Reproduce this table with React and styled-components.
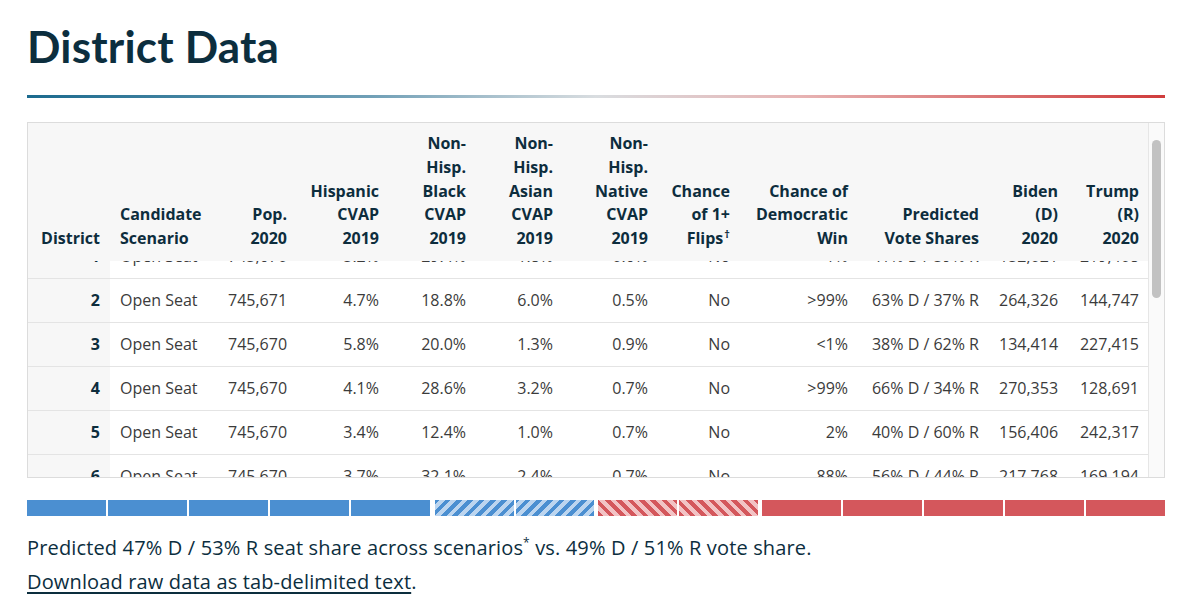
import React, { useLayoutEffect, useRef } from "react";
import styled, { createGlobalStyle } from "styled-components";

const Global = createGlobalStyle`
  html, body { margin: 0; padding: 0; background: #fff; }
  body { font-family: "Open Sans", "Noto Sans", "Liberation Sans", sans-serif; color: #0d2d3d; }
`;

const Page = styled.div`
  padding: 0 35px 0 27px;
  width: 1138px;
`;

const Title = styled.h1`
  margin: 0;
  padding-top: 20px;
  font-family: Lato, "Open Sans", sans-serif;
  font-size: 44px;
  line-height: 52px;
  font-weight: 700;
  color: #0c2e3e;
  letter-spacing: 0.2px;
`;

const Rule = styled.div`
  margin-top: 23px;
  height: 3px;
  background: linear-gradient(90deg, #1b6a8e 0%, #6f9fb6 30%, #d9dde0 50%, #e7b3b3 68%, #d03c3c 100%);
`;

const Frame = styled.div`
  position: relative;
  margin-top: 24px;
  border: 1px solid #dcdcdc;
`;

const Scroller = styled.div`
  height: 354px;
  overflow: hidden;
`;

const Track = styled.div`
  position: absolute;
  top: 0;
  right: 0;
  bottom: 0;
  width: 15px;
  background: #fafafa;
  border-left: 1px solid #e6e6e6;
  z-index: 5;
`;

const Thumb = styled.div`
  position: absolute;
  left: 3px;
  width: 9px;
  border-radius: 5px;
  background: #c2c2c2;
`;

const Table = styled.table`
  border-collapse: separate;
  border-spacing: 0;
  table-layout: fixed;
  width: 1121px;
`;

const Th = styled.th`
  position: sticky;
  top: 0;
  z-index: ${(p) => (p.$first ? 3 : 2)};
  ${(p) => (p.$first ? "left: 0;" : "")}
  background: #f7f7f7;
  text-align: ${(p) => (p.$left ? "left" : "right")};
  vertical-align: bottom;
  padding: 9px 10px 10px 10px;
  font-size: 16px;
  line-height: 23.8px;
  font-weight: 700;
  color: #0d2d3d;
  white-space: nowrap;
  sup { font-size: 11px; line-height: 0; vertical-align: 6px; margin-left: 1px; }
`;

const Td = styled.td`
  height: 43px;
  padding: 0 10px;
  border-bottom: 1px solid #e4e4e4;
  text-align: ${(p) => (p.$left ? "left" : "right")};
  font-size: 16px;
  color: #3b3b3b;
  white-space: nowrap;
  background: #fff;
`;

const DistrictTd = styled(Td)`
  position: sticky;
  left: 0;
  z-index: 1;
  background: #f7f7f7;
  font-weight: 700;
  color: #0d2d3d;
`;

const Bar = styled.div`
  display: flex;
  margin-top: 22px;
  height: 16px;
`;

const Seg = styled.div`
  flex: 1;
  margin-left: ${(p) => p.$ml}px;
  background: ${(p) =>
    p.$kind === "d"
      ? "#4b8fd1"
      : p.$kind === "r"
      ? "#d4575c"
      : p.$kind === "ld"
      ? "repeating-linear-gradient(-45deg, #4b8fd1 0 4px, #bcd5ef 4px 8px)"
      : "repeating-linear-gradient(45deg, #d4575c 0 4px, #f2c3c5 4px 8px)"};
`;

const Summary = styled.p`
  margin: 18px 0 0;
  font-size: 20px;
  line-height: 28px;
  letter-spacing: 0.15px;
  color: #0c2e3e;
  sup { font-size: 12px; line-height: 0; vertical-align: 8px; }
`;

const Download = styled.p`
  margin: 6px 0 0;
  font-size: 20px;
  line-height: 28px;
  letter-spacing: 0.15px;
  color: #0c2e3e;
  a { color: #0c2e3e; text-decoration: underline; text-underline-offset: 3px; text-decoration-thickness: 1.5px; }
`;

const widths = [82, 108, 79, 92, 87, 87, 95, 82, 118, 131, 79, 81];

const rows = [
  [1, "Open Seat", "745,670", "5.2%", "29.4%", "1.8%", "0.6%", "No", "<1%", "41% D / 59% R", "152,021", "219,408"],
  [2, "Open Seat", "745,671", "4.7%", "18.8%", "6.0%", "0.5%", "No", ">99%", "63% D / 37% R", "264,326", "144,747"],
  [3, "Open Seat", "745,670", "5.8%", "20.0%", "1.3%", "0.9%", "No", "<1%", "38% D / 62% R", "134,414", "227,415"],
  [4, "Open Seat", "745,670", "4.1%", "28.6%", "3.2%", "0.7%", "No", ">99%", "66% D / 34% R", "270,353", "128,691"],
  [5, "Open Seat", "745,670", "3.4%", "12.4%", "1.0%", "0.7%", "No", "2%", "40% D / 60% R", "156,406", "242,317"],
  [6, "Open Seat", "745,670", "3.7%", "32.1%", "2.4%", "0.7%", "No", "88%", "56% D / 44% R", "217,768", "169,194"],
  [7, "Open Seat", "745,671", "9.8%", "24.7%", "8.9%", "0.4%", "No", "91%", "57% D / 43% R", "221,330", "161,905"],
  [8, "Open Seat", "745,670", "4.9%", "27.5%", "1.4%", "0.6%", "No", "<1%", "35% D / 65% R", "126,118", "238,640"],
  [9, "Open Seat", "745,670", "6.1%", "9.8%", "2.1%", "0.5%", "No", "<1%", "31% D / 69% R", "109,782", "251,355"],
  [10, "Open Seat", "745,671", "3.9%", "21.3%", "2.6%", "0.6%", "No", "4%", "42% D / 58% R", "158,003", "221,714"],
  [11, "Open Seat", "745,670", "7.2%", "14.6%", "5.4%", "0.5%", "No", "<1%", "39% D / 61% R", "162,447", "248,830"],
  [12, "Open Seat", "745,670", "3.1%", "35.7%", "1.2%", "0.6%", "No", "9%", "44% D / 56% R", "163,905", "205,212"],
  [13, "Open Seat", "745,671", "8.4%", "52.9%", "3.5%", "0.5%", "No", ">99%", "74% D / 26% R", "282,117", "96,043"],
  [14, "Open Seat", "745,670", "6.6%", "10.2%", "1.1%", "0.6%", "No", "<1%", "27% D / 73% R", "93,508", "248,771"],
];

const segs = [
  ["d", 0], ["d", 2], ["d", 2], ["d", 2], ["d", 2],
  ["ld", 5], ["ld", 2],
  ["lr", 4], ["lr", 2],
  ["r", 4], ["r", 2], ["r", 2], ["r", 2], ["r", 2],
];

export default function App() {
  const ref = useRef(null);
  useLayoutEffect(() => {
    if (ref.current) ref.current.scrollTop = 26;
  }, []);
  return (
    <Page>
      <Global />
      <Title>District Data</Title>
      <Rule />
      <Frame>
        <Scroller ref={ref}>
          <Table>
            <colgroup>
              {widths.map((w, i) => (
                <col key={i} style={{ width: w }} />
              ))}
            </colgroup>
            <thead>
              <tr>
                <Th $first>District</Th>
                <Th $left>Candidate<br />Scenario</Th>
                <Th>Pop.<br />2020</Th>
                <Th>Hispanic<br />CVAP<br />2019</Th>
                <Th>Non-<br />Hisp.<br />Black<br />CVAP<br />2019</Th>
                <Th>Non-<br />Hisp.<br />Asian<br />CVAP<br />2019</Th>
                <Th>Non-<br />Hisp.<br />Native<br />CVAP<br />2019</Th>
                <Th>Chance<br />of 1+<br />Flips<sup>†</sup></Th>
                <Th>Chance of<br />Democratic<br />Win</Th>
                <Th>Predicted<br />Vote Shares</Th>
                <Th>Biden<br />(D)<br />2020</Th>
                <Th>Trump<br />(R)<br />2020</Th>
              </tr>
            </thead>
            <tbody>
              {rows.map((r) => (
                <tr key={r[0]}>
                  <DistrictTd>{r[0]}</DistrictTd>
                  {r.slice(1).map((v, i) => (
                    <Td key={i} $left={i === 0}>{v}</Td>
                  ))}
                </tr>
              ))}
            </tbody>
          </Table>
        </Scroller>
        <Track>
          <Thumb style={{ top: 17, height: 158 }} />
        </Track>
      </Frame>
      <Bar>
        {segs.map(([k, ml], i) => (
          <Seg key={i} $kind={k} $ml={ml} />
        ))}
      </Bar>
      <Summary>
        Predicted 47% D / 53% R seat share across scenarios<sup>*</sup> vs. 49% D / 51% R vote share.
      </Summary>
      <Download>
        <a href="#raw">Download raw data as tab-delimited text</a>.
      </Download>
    </Page>
  );
}
